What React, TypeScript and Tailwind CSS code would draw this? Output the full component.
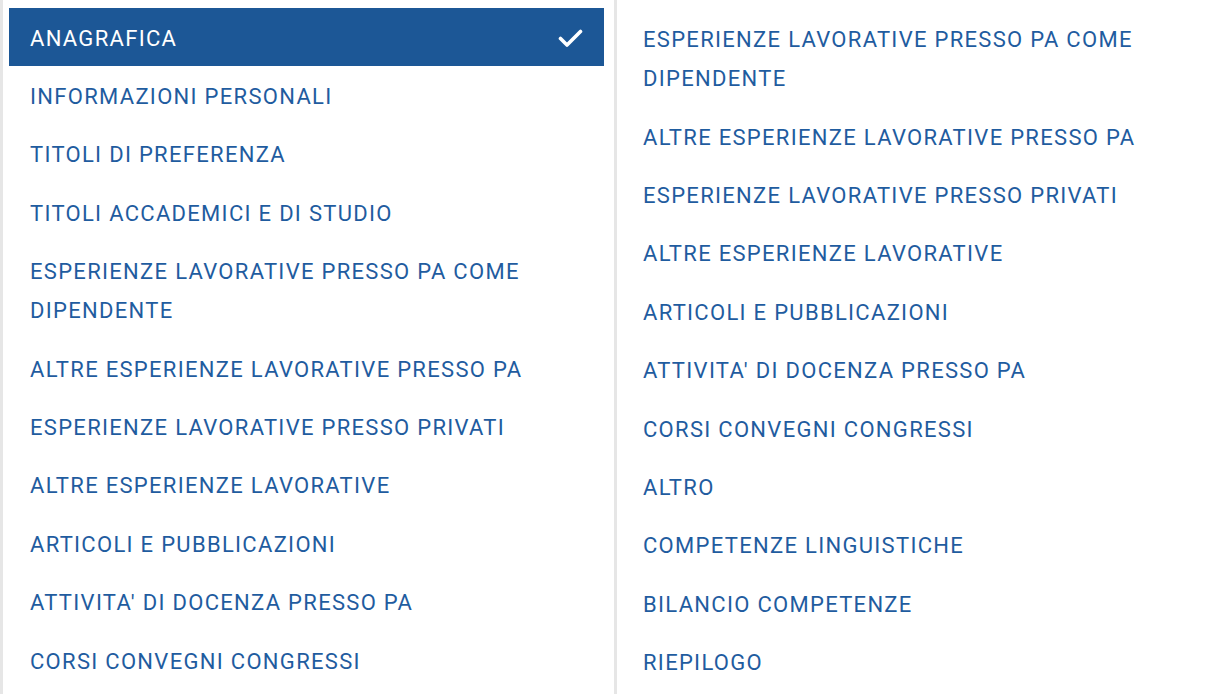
import { type ReactNode } from "react"

const leftItems = [
  "ANAGRAFICA",
  "INFORMAZIONI PERSONALI",
  "TITOLI DI PREFERENZA",
  "TITOLI ACCADEMICI E DI STUDIO",
  "ESPERIENZE LAVORATIVE PRESSO PA COME DIPENDENTE",
  "ALTRE ESPERIENZE LAVORATIVE PRESSO PA",
  "ESPERIENZE LAVORATIVE PRESSO PRIVATI",
  "ALTRE ESPERIENZE LAVORATIVE",
  "ARTICOLI E PUBBLICAZIONI",
  "ATTIVITA' DI DOCENZA PRESSO PA",
  "CORSI CONVEGNI CONGRESSI",
]

const rightItems = [
  "ESPERIENZE LAVORATIVE PRESSO PA COME DIPENDENTE",
  "ALTRE ESPERIENZE LAVORATIVE PRESSO PA",
  "ESPERIENZE LAVORATIVE PRESSO PRIVATI",
  "ALTRE ESPERIENZE LAVORATIVE",
  "ARTICOLI E PUBBLICAZIONI",
  "ATTIVITA' DI DOCENZA PRESSO PA",
  "CORSI CONVEGNI CONGRESSI",
  "ALTRO",
  "COMPETENZE LINGUISTICHE",
  "BILANCIO COMPETENZE",
  "RIEPILOGO",
]

function CheckMark() {
  return (
    <svg width="25" height="19" viewBox="0 0 25 19" fill="none">
      <polyline
        points="2.5,9.5 9,16 22.5,2.5"
        stroke="white"
        strokeWidth="3.6"
        strokeLinecap="round"
        strokeLinejoin="round"
      />
    </svg>
  )
}

function StepItem({ label, active, icon }: { label: string; active?: boolean; icon?: ReactNode }) {
  return (
    <li
      className={
        active
          ? "flex items-center justify-between bg-[#1c5796] text-white pl-[21px] pr-[21px] pt-[10.6px] pb-[8.8px]"
          : "flex items-center justify-between text-[#1f5c9f] pl-[21px] pr-[21px] pt-[10.6px] pb-[8.8px]"
      }
    >
      <span className="leading-[39px]">{label}</span>
      {icon}
    </li>
  )
}

export default function App() {
  return (
    <div
      className="flex h-[694px] w-[1217px] overflow-hidden bg-white text-[22px] tracking-[1.3px]"
      style={{ fontFamily: "Roboto, 'Noto Sans', sans-serif" }}
    >
      <div className="border-l-[3px] border-[#e6e6e6] pl-[6px] pt-[8px] w-[604px] shrink-0">
        <ul>
          {leftItems.map((item, i) => (
            <StepItem key={item} label={item} active={i === 0} icon={i === 0 ? <CheckMark /> : null} />
          ))}
        </ul>
      </div>
      <div className="ml-[10px] border-l-[3px] border-[#e6e6e6] pl-[5px] pt-[9.6px] w-[600px] shrink-0">
        <ul className="w-[595px]">
          {rightItems.map((item) => (
            <StepItem key={item} label={item} />
          ))}
        </ul>
      </div>
    </div>
  )
}
